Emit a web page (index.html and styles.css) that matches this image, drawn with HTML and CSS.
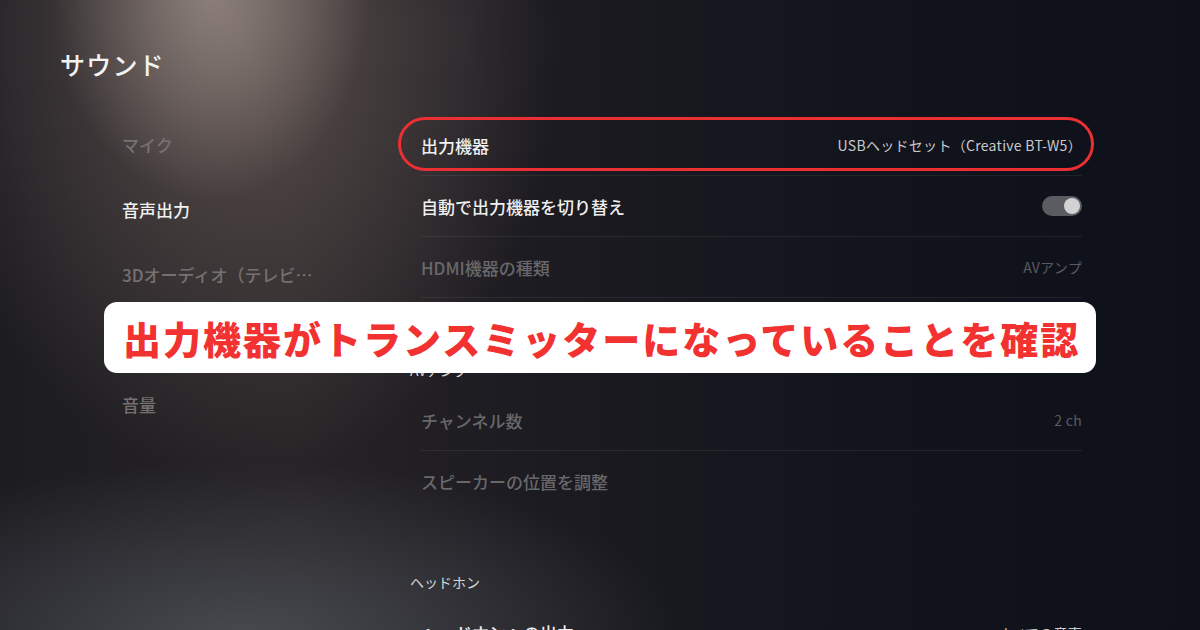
FILE: index.html
```html
<!DOCTYPE html>
<html lang="ja">
<head>
    <meta charset="utf-8">
    <link rel="stylesheet" href="styles.css">
</head>
<body>
    <div class="screen">
        <h1 class="title">サウンド</h1>

        <div class="content">
            <ul class="side-menu">
                <li class="menu-item">マイク</li>
                <li class="menu-item active">音声出力</li>
                <li class="menu-item">3Dオーディオ（テレビ…</li>
                <li class="menu-item">アクセシビリティー</li>
                <li class="menu-item">音量</li>
            </ul>

            <div class="settings">
                <div class="group">
                    <div class="row marked">
                        <span class="label">出力機器</span>
                        <span class="value">USBヘッドセット（Creative BT-W5）</span>
                    </div>
                    <div class="row">
                        <span class="label">自動で出力機器を切り替え</span>
                        <span class="toggle"><span class="knob"></span></span>
                    </div>
                    <div class="row dim">
                        <span class="label">HDMI機器の種類</span>
                        <span class="value">AVアンプ</span>
                    </div>
                    <div class="row dim last">
                        <span class="label">オーディオフォーマット（優先）</span>
                        <span class="value">Bitstream（Dolby）</span>
                    </div>
                </div>

                <div class="group">
                    <div class="group-title">AVアンプ</div>
                    <div class="row dim">
                        <span class="label">チャンネル数</span>
                        <span class="value">2 ch</span>
                    </div>
                    <div class="row dim last">
                        <span class="label">スピーカーの位置を調整</span>
                    </div>
                </div>

                <div class="group headphones">
                    <div class="group-title">ヘッドホン</div>
                    <div class="row last">
                        <span class="label">ヘッドホンへの出力</span>
                        <span class="value">すべての音声</span>
                    </div>
                </div>
            </div>
        </div>

        <div class="banner">出力機器がトランスミッターになっていることを確認</div>
    </div>
</body>
</html>
```

FILE: styles.css
```css
/* PS5 sound settings screen with annotation */
* {
    box-sizing: border-box;
}

body {
    margin: 0;
    width: 1200px;
    height: 630px;
    overflow: hidden;
    font-family: "Noto Sans CJK JP", "Noto Sans", sans-serif;
    color: #ececec;
}

.screen {
    position: relative;
    width: 1200px;
    height: 630px;
    overflow: hidden;
    background-color: #12141c;
    background-image:
        radial-gradient(ellipse 160px 210px at 210px -10px, rgba(180, 165, 157, 0.6), rgba(180, 165, 157, 0) 100%),
        radial-gradient(ellipse 320px 440px at 240px 40px, rgba(125, 108, 102, 0.6), rgba(125, 108, 102, 0) 100%),
        radial-gradient(ellipse 440px 180px at 240px 640px, rgba(80, 84, 90, 0.8), rgba(80, 84, 90, 0) 100%),
        linear-gradient(90deg, #1d1c21 0%, #262326 25%, #1c1b21 45%, #13151d 70%, #0e101a 100%);
}

.title {
    margin: 0;
    padding: 48px 0 0 60px;
    font-size: 25px;
    line-height: 32px;
    font-weight: 500;
    letter-spacing: 1.2px;
    color: #f2f2f2;
}

.content {
    display: flex;
    margin-top: 35px;
}

.side-menu {
    list-style: none;
    margin: -3px 0 0;
    padding: 0 0 0 122px;
    width: 410px;
}

.menu-item {
    height: 65px;
    line-height: 65px;
    font-size: 17px;
    font-weight: 500;
    color: #767171;
    white-space: nowrap;
}

.menu-item.active {
    color: #f0f0f0;
}

.settings {
    width: 672px;
}

.group-title {
    font-size: 14px;
    line-height: 22px;
    color: #d6d6d8;
    margin-bottom: 9px;
}

.headphones {
    margin-top: 59px;
}

.row {
    position: relative;
    display: flex;
    align-items: center;
    justify-content: space-between;
    height: 61px;
    margin-left: 11px;
    border-bottom: 1px solid rgba(255, 255, 255, 0.07);
}

.row.last {
    border-bottom: none;
}

.label {
    font-size: 17px;
    font-weight: 500;
    color: #efefef;
}

.value {
    font-size: 14px;
    letter-spacing: 0.3px;
    color: #c9c9cc;
}

.row.dim .label {
    color: #68686b;
}

.row.dim .value {
    color: #5a5b60;
}

.toggle {
    display: flex;
    justify-content: flex-end;
    align-items: center;
    width: 40px;
    height: 20px;
    padding: 2px;
    border-radius: 10px;
    background: #5a5c62;
}

.knob {
    width: 16px;
    height: 16px;
    border-radius: 50%;
    background: #d2d2d2;
}

/* red annotation around the first row */
.row.marked::after {
    content: "";
    position: absolute;
    left: -23px;
    right: -12px;
    top: 2px;
    bottom: 4px;
    border: 3px solid #ec2f33;
    border-radius: 28px;
}

.banner {
    position: absolute;
    left: 104px;
    top: 302px;
    width: 992px;
    height: 71px;
    display: flex;
    align-items: center;
    padding-left: 19px;
    background: #ffffff;
    border-radius: 13px;
    font-size: 38px;
    font-weight: 900;
    letter-spacing: 2px;
    color: #f23131;
    white-space: nowrap;
}
```
